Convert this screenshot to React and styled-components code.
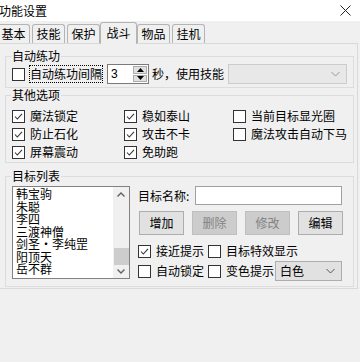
import React from "react";
import styled, { createGlobalStyle, css } from "styled-components";

const GlobalStyle = createGlobalStyle`
  html, body {
    margin: 0;
    padding: 0;
    background: #f0f0f0;
  }
  body {
    font-family: "Noto Sans CJK SC", "Liberation Sans", sans-serif;
    font-size: 12px;
    color: #000;
  }
`;

const Window = styled.div`
  width: 360px;
  height: 362px;
  overflow: hidden;
  background: #f0f0f0;
`;

const TitleBar = styled.div`
  height: 21px;
  background: #fff;
  display: flex;
  align-items: center;
  justify-content: space-between;
  padding-right: 9px;
`;

const Title = styled.span`
  line-height: 12px;
  margin-left: -1px;
`;

const TabStrip = styled.div`
  height: 22px;
  display: flex;
  align-items: flex-end;
  gap: 2px;
  margin-left: -3px;
  position: relative;
  z-index: 1;
`;

const Tab = styled.div`
  width: 33px;
  height: 19px;
  box-sizing: border-box;
  border: 1px solid #b4b4b4;
  border-bottom: none;
  border-radius: 3px 3px 0 0;
  background: #f0f0f0;
  display: flex;
  align-items: center;
  justify-content: center;
  line-height: 12px;
  ${(p) =>
    p.$active &&
    css`
      width: 37px;
      height: 22px;
      margin: 0 -2px -1px;
      padding-bottom: 2px;
    `}
`;

const Panel = styled.div`
  margin: 0 2px 0 -1px;
  height: 246px;
  box-sizing: border-box;
  border: 1px solid #d9d9d9;
  padding: 6px 3px 0 5px;
  display: flex;
  flex-direction: column;
  gap: 1px;
`;

const Group = styled.fieldset`
  margin: 0;
  margin-top: ${(p) => p.$mt || 0}px;
  border: 1px solid #dcdcdc;
  padding: ${(p) => p.$pad || "2px 5px 3px 6px"};
  min-width: 0;
`;

const Legend = styled.legend`
  padding: 0 1px;
  margin-left: -1px;
  line-height: 12px;
`;

const Row = styled.div`
  display: flex;
  align-items: center;
  height: ${(p) => p.$h || 20}px;
  margin-top: ${(p) => p.$mt || 0}px;
`;

const Box = styled.span`
  width: 13px;
  height: 13px;
  flex: none;
  box-sizing: border-box;
  border: 1px solid #333;
  background: #fff;
  display: flex;
  align-items: center;
  justify-content: center;
`;

const CheckLabel = styled.span`
  margin-left: 5px;
  line-height: 12px;
  white-space: nowrap;
  ${(p) =>
    p.$focus &&
    css`
      margin-left: 4px;
      border: 1px dotted #000;
      padding: 2px 0;
    `}
`;

const Check = ({ checked, children, focus }) => (
  <Row>
    <Box>
      {checked && (
        <svg width="11" height="11" viewBox="0 0 11 11">
          <path d="M2 5.5 L4.3 8 L9 2.8" fill="none" stroke="#333" strokeWidth="1.1" />
        </svg>
      )}
    </Box>
    <CheckLabel $focus={focus}>{children}</CheckLabel>
  </Row>
);

const Spin = styled.div`
  width: 42px;
  height: 20px;
  box-sizing: border-box;
  border: 1px solid #7a7a7a;
  background: #fff;
  margin-left: 4px;
  display: flex;
  justify-content: space-between;
  padding: 1px;
`;

const SpinValue = styled.span`
  padding-left: 2px;
  line-height: 16px;
  font-family: "Liberation Sans", sans-serif;
`;

const SpinButtons = styled.div`
  width: 14px;
  display: flex;
  flex-direction: column;
  gap: 1px;
`;

const SpinButton = styled.div`
  flex: 1;
  background: #e1e1e1;
  border: 1px solid #adadad;
  display: flex;
  align-items: center;
  justify-content: center;
`;

const Text = styled.span`
  line-height: 12px;
  white-space: nowrap;
  margin-left: ${(p) => p.$ml || 0}px;
`;

const Combo = styled.div`
  width: ${(p) => p.$w}px;
  height: 20px;
  box-sizing: border-box;
  border: 1px solid ${(p) => (p.$disabled ? "#cccccc" : "#adadad")};
  background: ${(p) => (p.$disabled ? "#e8e8e8" : "#e1e1e1")};
  margin-left: ${(p) => p.$ml || 0}px;
  display: flex;
  align-items: center;
  justify-content: space-between;
  padding: 0 6px 0 4px;
  line-height: 12px;
`;

const Chevron = ({ color }) => (
  <svg width="9" height="6" viewBox="0 0 9 6">
    <path d="M0.5 1 L4.5 5 L8.5 1" fill="none" stroke={color} strokeWidth="1" />
  </svg>
);

const Grid = styled.div`
  display: grid;
  grid-template-columns: 112px 109px auto;
  grid-auto-rows: 18px;
  align-items: center;
`;

const TargetArea = styled.div`
  display: flex;
  gap: 8px;
`;

const ListBox = styled.div`
  width: 118px;
  height: 93px;
  box-sizing: border-box;
  border: 1px solid #828282;
  background: #fff;
  display: flex;
  justify-content: space-between;
  overflow: hidden;
`;

const Items = styled.div`
  padding: 1px 0 0 3px;
  display: flex;
  flex-direction: column;
  line-height: 12.5px;
  white-space: nowrap;
`;

const ScrollBar = styled.div`
  width: 16px;
  background: #f0f0f0;
  display: flex;
  flex-direction: column;
  align-items: center;
  justify-content: space-between;
  padding: 5px 0 4px;
  box-sizing: border-box;
`;

const Thumb = styled.div`
  width: 15px;
  height: 17px;
  background: #cdcdcd;
  margin-top: auto;
  margin-bottom: 4px;
`;

const RightCol = styled.div`
  display: flex;
  flex-direction: column;
  width: 205px;
`;

const Input = styled.div`
  width: 147px;
  height: 19px;
  box-sizing: border-box;
  border: 1px solid #a0a0a0;
  background: #fff;
  margin-left: 6px;
`;

const Buttons = styled.div`
  display: flex;
  gap: 8px;
  margin: 6px 0 9px 1px;
`;

const Button = styled.div`
  width: 45px;
  height: 24px;
  box-sizing: border-box;
  border: 1px solid ${(p) => (p.$disabled ? "#bfbfbf" : "#adadad")};
  background: ${(p) => (p.$disabled ? "#cccccc" : "#e1e1e1")};
  color: ${(p) => (p.$disabled ? "#838383" : "#000")};
  display: flex;
  align-items: center;
  justify-content: center;
  line-height: 12px;
`;

const Pair = styled.div`
  display: flex;
  align-items: center;
  gap: 4px;
`;

const Close = () => (
  <svg width="11" height="11" viewBox="0 0 11 11">
    <path d="M0.5 0.5 L10.5 10.5 M10.5 0.5 L0.5 10.5" stroke="#222" strokeWidth="1" />
  </svg>
);

const Arrow = ({ up }) => (
  <svg width="8" height="5" viewBox="0 0 8 5">
    <path d={up ? "M0.5 4.5 L4 1 L7.5 4.5" : "M0.5 0.5 L4 4 L7.5 0.5"} fill="none" stroke="#606060" strokeWidth="1.4" />
  </svg>
);

const Tri = ({ up }) => (
  <svg width="7" height="4" viewBox="0 0 7 4">
    <path d={up ? "M0 4 L3.5 0 L7 4 Z" : "M0 0 L3.5 4 L7 0 Z"} fill="#000" />
  </svg>
);

const tabs = ["基本", "技能", "保护", "战斗", "物品", "挂机"];
const targets = ["韩宝驹", "朱聪", "李四", "三渡神僧", "剑圣・李纯罡", "阳顶天", "岳不群"];

export default function App() {
  return (
    <Window>
      <GlobalStyle />
      <TitleBar>
        <Title>功能设置</Title>
        <Close />
      </TitleBar>
      <TabStrip>
        {tabs.map((t) => (
          <Tab key={t} $active={t === "战斗"}>
            {t}
          </Tab>
        ))}
      </TabStrip>
      <Panel>
        <Group>
          <Legend>自动练功</Legend>
          <Row>
            <Check focus>自动练功间隔</Check>
            <Spin>
              <SpinValue>3</SpinValue>
              <SpinButtons>
                <SpinButton>
                  <Tri up />
                </SpinButton>
                <SpinButton>
                  <Tri />
                </SpinButton>
              </SpinButtons>
            </Spin>
            <Text $ml={3}>秒，使用技能</Text>
            <Combo $w={119} $ml={4} $disabled>
              <span />
              <Chevron color="#999" />
            </Combo>
          </Row>
        </Group>
        <Group $pad="6px 5px 1px 6px">
          <Legend>其他选项</Legend>
          <Grid>
            <Check checked>魔法锁定</Check>
            <Check checked>稳如泰山</Check>
            <Check>当前目标显光圈</Check>
            <Check checked>防止石化</Check>
            <Check checked>攻击不卡</Check>
            <Check>魔法攻击自动下马</Check>
            <Check checked>屏幕震动</Check>
            <Check checked>免助跑</Check>
          </Grid>
        </Group>
        <Group $pad="4px 5px 5px 6px" $mt={6}>
          <Legend>目标列表</Legend>
          <TargetArea>
            <ListBox>
              <Items>
                {targets.map((t) => (
                  <span key={t}>{t}</span>
                ))}
              </Items>
              <ScrollBar>
                <Arrow up />
                <Thumb />
                <Arrow />
              </ScrollBar>
            </ListBox>
            <RightCol>
              <Row $h={19}>
                <Text>目标名称:</Text>
                <Input />
              </Row>
              <Buttons>
                <Button>增加</Button>
                <Button $disabled>删除</Button>
                <Button $disabled>修改</Button>
                <Button>编辑</Button>
              </Buttons>
              <Row $h={14}>
                <Pair>
                  <Check checked>接近提示</Check>
                  <Check>目标特效显示</Check>
                </Pair>
              </Row>
              <Row $mt={3}>
                <Pair>
                  <Check>自动锁定</Check>
                  <Check>变色提示</Check>
                </Pair>
                <Combo $w={67} $ml={1}>
                  <span>白色</span>
                  <Chevron color="#555" />
                </Combo>
              </Row>
            </RightCol>
          </TargetArea>
        </Group>
      </Panel>
    </Window>
  );
}
